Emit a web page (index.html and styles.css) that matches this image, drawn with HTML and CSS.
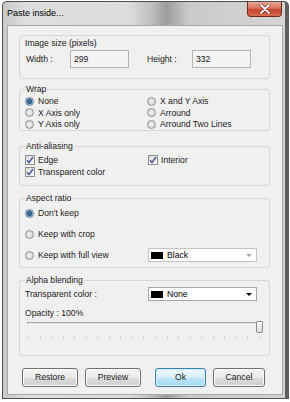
FILE: index.html
```html
<!DOCTYPE html>
<html lang="en">

<head>
  <meta charset="UTF-8">
  <title>Paste inside...</title>
  <link rel="stylesheet" href="styles.css">
</head>

<body>
  <div class="ventana">
    <div class="barra-titulo">
      <span class="titulo">Paste inside...</span>
      <span class="cerrar">
        <svg width="12" height="10" viewBox="0 0 12 10">
          <path d="M2 1 L10 9 M10 1 L2 9" stroke="#5a1a10" stroke-width="3" stroke-linecap="round" />
          <path d="M2 1 L10 9 M10 1 L2 9" stroke="#ffffff" stroke-width="1.8" stroke-linecap="round" />
        </svg>
      </span>
    </div>

    <div class="contenido">
      <div class="grupo-tamano">
        <div class="grupo-titulo">Image size (pixels)</div>
        <div class="fila-tamano">
          <span class="etiqueta-ancho">Width :</span>
          <span class="caja">299</span>
          <span class="etiqueta-alto">Height :</span>
          <span class="caja">332</span>
        </div>
      </div>

      <fieldset class="grupo grupo-wrap">
        <legend>Wrap</legend>
        <div class="columnas">
          <div class="opcion"><span class="radio marcado"></span>None</div>
          <div class="opcion"><span class="radio"></span>X and Y Axis</div>
          <div class="opcion"><span class="radio"></span>X Axis only</div>
          <div class="opcion"><span class="radio"></span>Arround</div>
          <div class="opcion"><span class="radio"></span>Y Axis only</div>
          <div class="opcion"><span class="radio"></span>Arround Two Lines</div>
        </div>
      </fieldset>

      <fieldset class="grupo grupo-alias">
        <legend>Anti-aliasing</legend>
        <div class="columnas">
          <div class="opcion"><span class="check"><svg width="8" height="8" viewBox="0 0 8 8"><path d="M1 4.2 L3 6.5 L7 1" fill="none" stroke="#4a5f97" stroke-width="1.5" /></svg></span>Edge</div>
          <div class="opcion opcion-interior"><span class="check"><svg width="8" height="8" viewBox="0 0 8 8"><path d="M1 4.2 L3 6.5 L7 1" fill="none" stroke="#4a5f97" stroke-width="1.5" /></svg></span>Interior</div>
          <div class="opcion"><span class="check"><svg width="8" height="8" viewBox="0 0 8 8"><path d="M1 4.2 L3 6.5 L7 1" fill="none" stroke="#4a5f97" stroke-width="1.5" /></svg></span>Transparent color</div>
        </div>
      </fieldset>

      <fieldset class="grupo grupo-aspecto">
        <legend>Aspect ratio</legend>
        <div class="filas-aspecto">
          <div class="opcion"><span class="radio marcado"></span>Don't keep</div>
          <div class="opcion"><span class="radio"></span>Keep with crop</div>
          <div class="fila-lista">
            <div class="opcion"><span class="radio"></span>Keep with full view</div>
            <div class="lista lista-gris">
              <span class="muestra"></span>Black<span class="flecha"></span>
            </div>
          </div>
        </div>
      </fieldset>

      <fieldset class="grupo grupo-alfa">
        <legend>Alpha blending</legend>
        <div class="fila-lista">
          <span>Transparent color :</span>
          <div class="lista">
            <span class="muestra"></span>None<span class="flecha"></span>
          </div>
        </div>
        <div class="opacidad">Opacity : 100%</div>
        <div class="deslizador">
          <div class="pista"></div>
          <span class="tirador"></span>
        </div>
        <div class="marcas">
          <i></i><i></i><i></i><i></i><i></i><i></i><i></i><i></i><i></i><i></i><i></i>
          <i></i><i></i><i></i><i></i><i></i><i></i><i></i><i></i><i></i><i></i>
        </div>
      </fieldset>

      <div class="botones">
        <button type="button" class="boton boton-restaurar">Restore</button>
        <button type="button" class="boton">Preview</button>
        <button type="button" class="boton boton-ok">Ok</button>
        <button type="button" class="boton boton-cancelar">Cancel</button>
      </div>
    </div>
  </div>
</body>

</html>
```

FILE: styles.css
```css
body {
  margin: 0;
  background-color: #ffffff;
  font-family: "Liberation Sans", Arial, sans-serif;
  font-size: 8.6px;
  color: #1a1a1a;
}

.ventana {
  box-sizing: border-box;
  width: 287px;
  height: 398px;
  margin: 1px 0 0 2px;
  padding: 0 2px 3px 4px;
  display: flex;
  flex-direction: column;
  border: 1px solid #4f4f4f;
  border-right: 4px solid #5e5e5e;
  border-radius: 5px 5px 0 0;
  background: linear-gradient(to right, #c9c9c9 0, #dedede 8%, #dcdcdc 45%, #bdbdbd 53%, #9c9c9c 58%, #cbcbcb 66%, #d4d4d4 100%);
}

.barra-titulo {
  height: 23px;
  display: flex;
  justify-content: space-between;
  align-items: flex-start;
}

.titulo {
  margin-top: 6px;
  font-size: 9px;
  line-height: 11px;
  color: #000000;
}

.cerrar {
  width: 35px;
  height: 15px;
  margin-right: 1px;
  display: flex;
  align-items: center;
  justify-content: center;
  box-sizing: border-box;
  border: 1px solid #6b2a1f;
  border-top: none;
  border-radius: 0 0 4px 4px;
  background: linear-gradient(#e8a898 0, #d9705c 45%, #c7442e 55%, #d86b4f 100%);
}

.contenido {
  flex: 1;
  padding: 9px 12px 0 11px;
  background-color: #f0f0f0;
  border: 1px solid #a8a8a8;
}

.grupo-tamano {
  height: 44px;
  box-sizing: border-box;
  padding: 1.5px 0 0 6px;
  border: 1px solid #d5d5d5;
  border-radius: 3px;
}

.grupo-titulo {
  line-height: 11px;
  margin-left: -1px;
}

.fila-tamano {
  margin-top: 1.5px;
  display: flex;
  align-items: center;
}

.etiqueta-ancho {
  width: 44px;
}

.etiqueta-alto {
  width: 45px;
  margin-left: 18px;
}

.caja {
  box-sizing: border-box;
  width: 59px;
  height: 18px;
  padding-left: 3px;
  line-height: 16px;
  background-color: #f4f4f4;
  border: 1px solid #b4b4b4;
}

.grupo {
  margin: 0;
  padding: 0 0 0 5px;
  min-width: 0;
  border: 1px solid #d5d5d5;
  border-radius: 3px;
}

.grupo legend {
  padding: 0 1px;
  line-height: 11px;
}

.grupo-wrap {
  margin-top: 4.5px;
  padding-top: 1px;
}

.grupo-alias {
  margin-top: 9.5px;
  padding-top: 2.5px;
  padding-bottom: 7px;
}

.grupo-aspecto {
  margin-top: 6.5px;
  padding-top: 2.5px;
  padding-bottom: 5px;
}

.grupo-alfa {
  margin-top: 6.5px;
  padding-top: 1.5px;
  padding-bottom: 17px;
}

.columnas {
  display: grid;
  grid-template-columns: 122px auto;
}

.grupo-wrap .opcion {
  height: 11.5px;
}

.grupo-alias .opcion {
  height: 12px;
  gap: 3px;
}

.opcion-interior {
  margin-left: 1px;
}

.opcion {
  display: flex;
  align-items: center;
  gap: 4px;
}

.radio {
  box-sizing: border-box;
  width: 9px;
  height: 9px;
  border-radius: 50%;
  border: 1px solid #929292;
  background: radial-gradient(circle, #f6f6f6 0, #e2e2e2 2px, #cfcfcf 4px);
}

.radio.marcado {
  border-color: #5f7fa0;
  background: radial-gradient(circle, #5d8fbb 0, #1f4e7b 2px, #8fb0cc 3px, #dfe7ee 4px);
}

.check {
  box-sizing: border-box;
  width: 10px;
  height: 10px;
  display: flex;
  align-items: center;
  justify-content: center;
  border: 1px solid #8e8f8f;
  background: linear-gradient(135deg, #dcdcdc, #fbfbfb);
}

.filas-aspecto {
  display: flex;
  flex-direction: column;
  gap: 7px;
}

.filas-aspecto .opcion {
  height: 14px;
}

.fila-lista {
  display: grid;
  grid-template-columns: 123px auto;
  align-items: center;
}

.lista {
  box-sizing: border-box;
  width: 109px;
  height: 14px;
  padding-left: 2px;
  display: flex;
  align-items: center;
  background-color: #ffffff;
  border: 1px solid #a5a5a5;
  color: #000000;
}

.lista-gris {
  border-color: #c4c4c4;
}

.muestra {
  width: 12px;
  height: 7px;
  margin-right: 4px;
  background-color: #000000;
}

.flecha {
  margin-left: auto;
  margin-right: 4px;
  border-top: 3px solid #000000;
  border-left: 3px solid transparent;
  border-right: 3px solid transparent;
}

.lista-gris .flecha {
  border-top-color: #a8a8a8;
}

.opacidad {
  margin-top: 6.5px;
  line-height: 11px;
}

.deslizador {
  position: relative;
  height: 9px;
  margin: 1px 8px 0 2px;
}

.pista {
  margin-top: 3px;
  height: 1px;
  border-top: 1px solid #a8a8a8;
  border-bottom: 1px solid #ffffff;
  background-color: #e4e4e4;
  border-left: 1px solid #a8a8a8;
}

.tirador {
  position: absolute;
  right: -2px;
  top: -1px;
  width: 5px;
  height: 10px;
  border: 1px solid #8a8a8a;
  border-radius: 1px 1px 2px 2px;
  background: linear-gradient(#fafafa, #dcdcdc);
}

.marcas {
  display: flex;
  justify-content: space-between;
  margin: 6px 9px 0 3px;
}

.marcas i {
  width: 1px;
  height: 1px;
  background-color: #9a9a9a;
}

.botones {
  display: flex;
  gap: 7px;
  margin: 12px 0 0 3px;
}

.boton {
  box-sizing: border-box;
  width: 56px;
  height: 19px;
  padding: 0;
  font-family: "Liberation Sans", Arial, sans-serif;
  font-size: 8.6px;
  color: #1a1a1a;
  border: 1px solid #707070;
  border-radius: 3px;
  box-shadow: inset 0 0 0 1px #fbfbfb;
  background: linear-gradient(#f3f3f3 0, #ebebeb 50%, #dddddd 51%, #cfcfcf 100%);
}

.boton-ok {
  width: 51px;
  margin-left: 7px;
  border-color: #3c7fb1;
  box-shadow: inset 0 0 0 1px #d8f0fc;
  background: linear-gradient(#eaf6fd 0, #d9f0fc 50%, #bee6fd 51%, #a7d9f5 100%);
}

.boton-cancelar {
  width: 52px;
}
```
